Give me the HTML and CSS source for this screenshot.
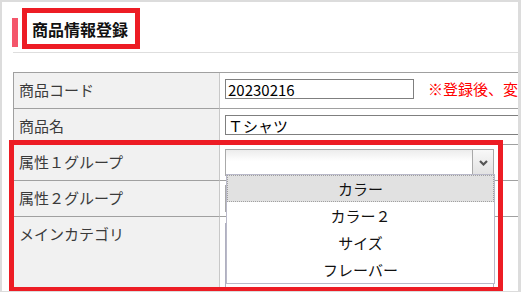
FILE: index.html
```html
<!DOCTYPE html>
<html lang="ja">
<head>
<meta charset="utf-8">
<title>商品情報登録</title>
<link rel="stylesheet" href="styles.css">
</head>
<body>
<div class="frame">
  <div class="page-head">
    <span class="accent"></span>
    <h1 class="title">商品情報登録</h1>
  </div>
  <table class="form">
    <tr>
      <th>商品コード</th>
      <td><input class="txt code" type="text" value="20230216"><span class="note">※登録後、変更できません</span></td>
    </tr>
    <tr>
      <th>商品名</th>
      <td><input class="txt name" type="text" value="Ｔシャツ"></td>
    </tr>
    <tr>
      <th>属性１グループ</th>
      <td>
        <div class="select-wrap">
          <div class="select"><span class="arrow"><svg width="9" height="6" viewBox="0 0 9 6"><path d="M1 1 L4.5 4.5 L8 1" fill="none" stroke="#555" stroke-width="2.2"/></svg></span></div>
          <ul class="dropdown">
            <li class="item active">カラー</li>
            <li class="item">カラー２</li>
            <li class="item">サイズ</li>
            <li class="item">フレーバー</li>
          </ul>
        </div>
      </td>
    </tr>
    <tr>
      <th>属性２グループ</th>
      <td><div class="select"><span class="arrow"></span></div></td>
    </tr>
    <tr class="tall">
      <th>メインカテゴリ</th>
      <td><div class="multi"></div></td>
    </tr>
  </table>
  <div class="mark mark-title"></div>
  <div class="mark mark-attr"></div>
</div>
</body>
</html>
```

FILE: styles.css
```css
html, body {
  margin: 0;
  padding: 0;
  background: #fff;
}

body {
  font-family: "Noto Sans CJK JP", "Liberation Sans", sans-serif;
  font-size: 15px;
  color: #333;
}

.frame {
  position: relative;
  width: 521px;
  height: 292px;
  box-sizing: border-box;
  border: 2px solid #dcdcdc;
  border-right-width: 3px;
  border-bottom-width: 1px;
  overflow: hidden;
  background: #fff;
}

.page-head {
  display: flex;
  align-items: flex-start;
  margin-left: 11px;
  padding: 16px 0 5px;
  border-bottom: 1px solid #dedede;
}

.accent {
  display: block;
  width: 6px;
  height: 29px;
  margin-left: -1px;
  background: #f4566b;
}

.title {
  margin: 0 0 0 14px;
  font-size: 16px;
  line-height: 22px;
  font-weight: bold;
  color: #111;
}

.form {
  margin: 19px 0 0 11px;
  width: 530px;
  table-layout: fixed;
  border-collapse: separate;
  border-spacing: 0;
  border-top: 1px solid #a0a0a0;
  border-left: 1px solid #a0a0a0;
}

.form th,
.form td {
  box-sizing: border-box;
  height: 36px;
  border-bottom: 1px solid #a0a0a0;
  vertical-align: top;
  white-space: nowrap;
}

.form th {
  width: 206px;
  padding: 7px 5px 8px;
  border-right: 1px solid #c8c8c8;
  background: #f1f1f1;
  font-weight: normal;
  text-align: left;
  line-height: 20px;
  color: #3a3a3a;
}

.form td {
  padding: 6px 5px 0;
  background: #fff;
}

.form tr.tall th,
.form tr.tall td {
  height: 90px;
}

.txt {
  display: inline-block;
  vertical-align: top;
  box-sizing: border-box;
  height: 20px;
  margin: 0;
  padding: 0 2px;
  border: 1px solid #7f7f7f;
  font-family: "Noto Sans CJK JP", "Liberation Sans", sans-serif;
  font-size: 15px;
  line-height: 18px;
  color: #000;
  background: #fff;
}

.txt.code {
  width: 189px;
}

.txt.name {
  width: 320px;
}

.note {
  display: inline-block;
  vertical-align: top;
  margin-left: 14px;
  line-height: 20px;
  color: #f00;
}

.select-wrap {
  position: relative;
}

.select {
  position: relative;
  box-sizing: border-box;
  width: 269px;
  height: 27px;
  margin-top: -2px;
  border: 1px solid #a9a9a9;
  background: linear-gradient(#ececec, #fff 45%);
}

.arrow {
  position: absolute;
  top: 0;
  right: 0;
  bottom: 0;
  display: flex;
  align-items: center;
  justify-content: center;
  width: 20px;
  border-left: 1px solid #a9a9a9;
  background: linear-gradient(#f8f8f8, #e2e2e2);
}

.multi {
  box-sizing: border-box;
  width: 269px;
  height: 80px;
  border: 1px solid #b0b0c0;
}

.dropdown {
  position: absolute;
  top: 25px;
  left: 1px;
  width: 269px;
  box-sizing: border-box;
  margin: 0;
  padding: 0;
  list-style: none;
  border: 1px solid #b9b9c9;
  background: #fff;
  z-index: 2;
}

.item {
  box-sizing: border-box;
  height: 27px;
  border: 1px dotted transparent;
  line-height: 25px;
  text-align: center;
  color: #111;
}

.item.active {
  background: #e1e1e1;
  border-color: #a0a0a0;
}

.mark {
  position: absolute;
  box-sizing: border-box;
  border: 5px solid #ed1c24;
  z-index: 5;
}

.mark-title {
  left: 20px;
  top: 6px;
  width: 118px;
  height: 41px;
}

.mark-attr {
  left: 7px;
  top: 138px;
  width: 494px;
  height: 152px;
}
```
